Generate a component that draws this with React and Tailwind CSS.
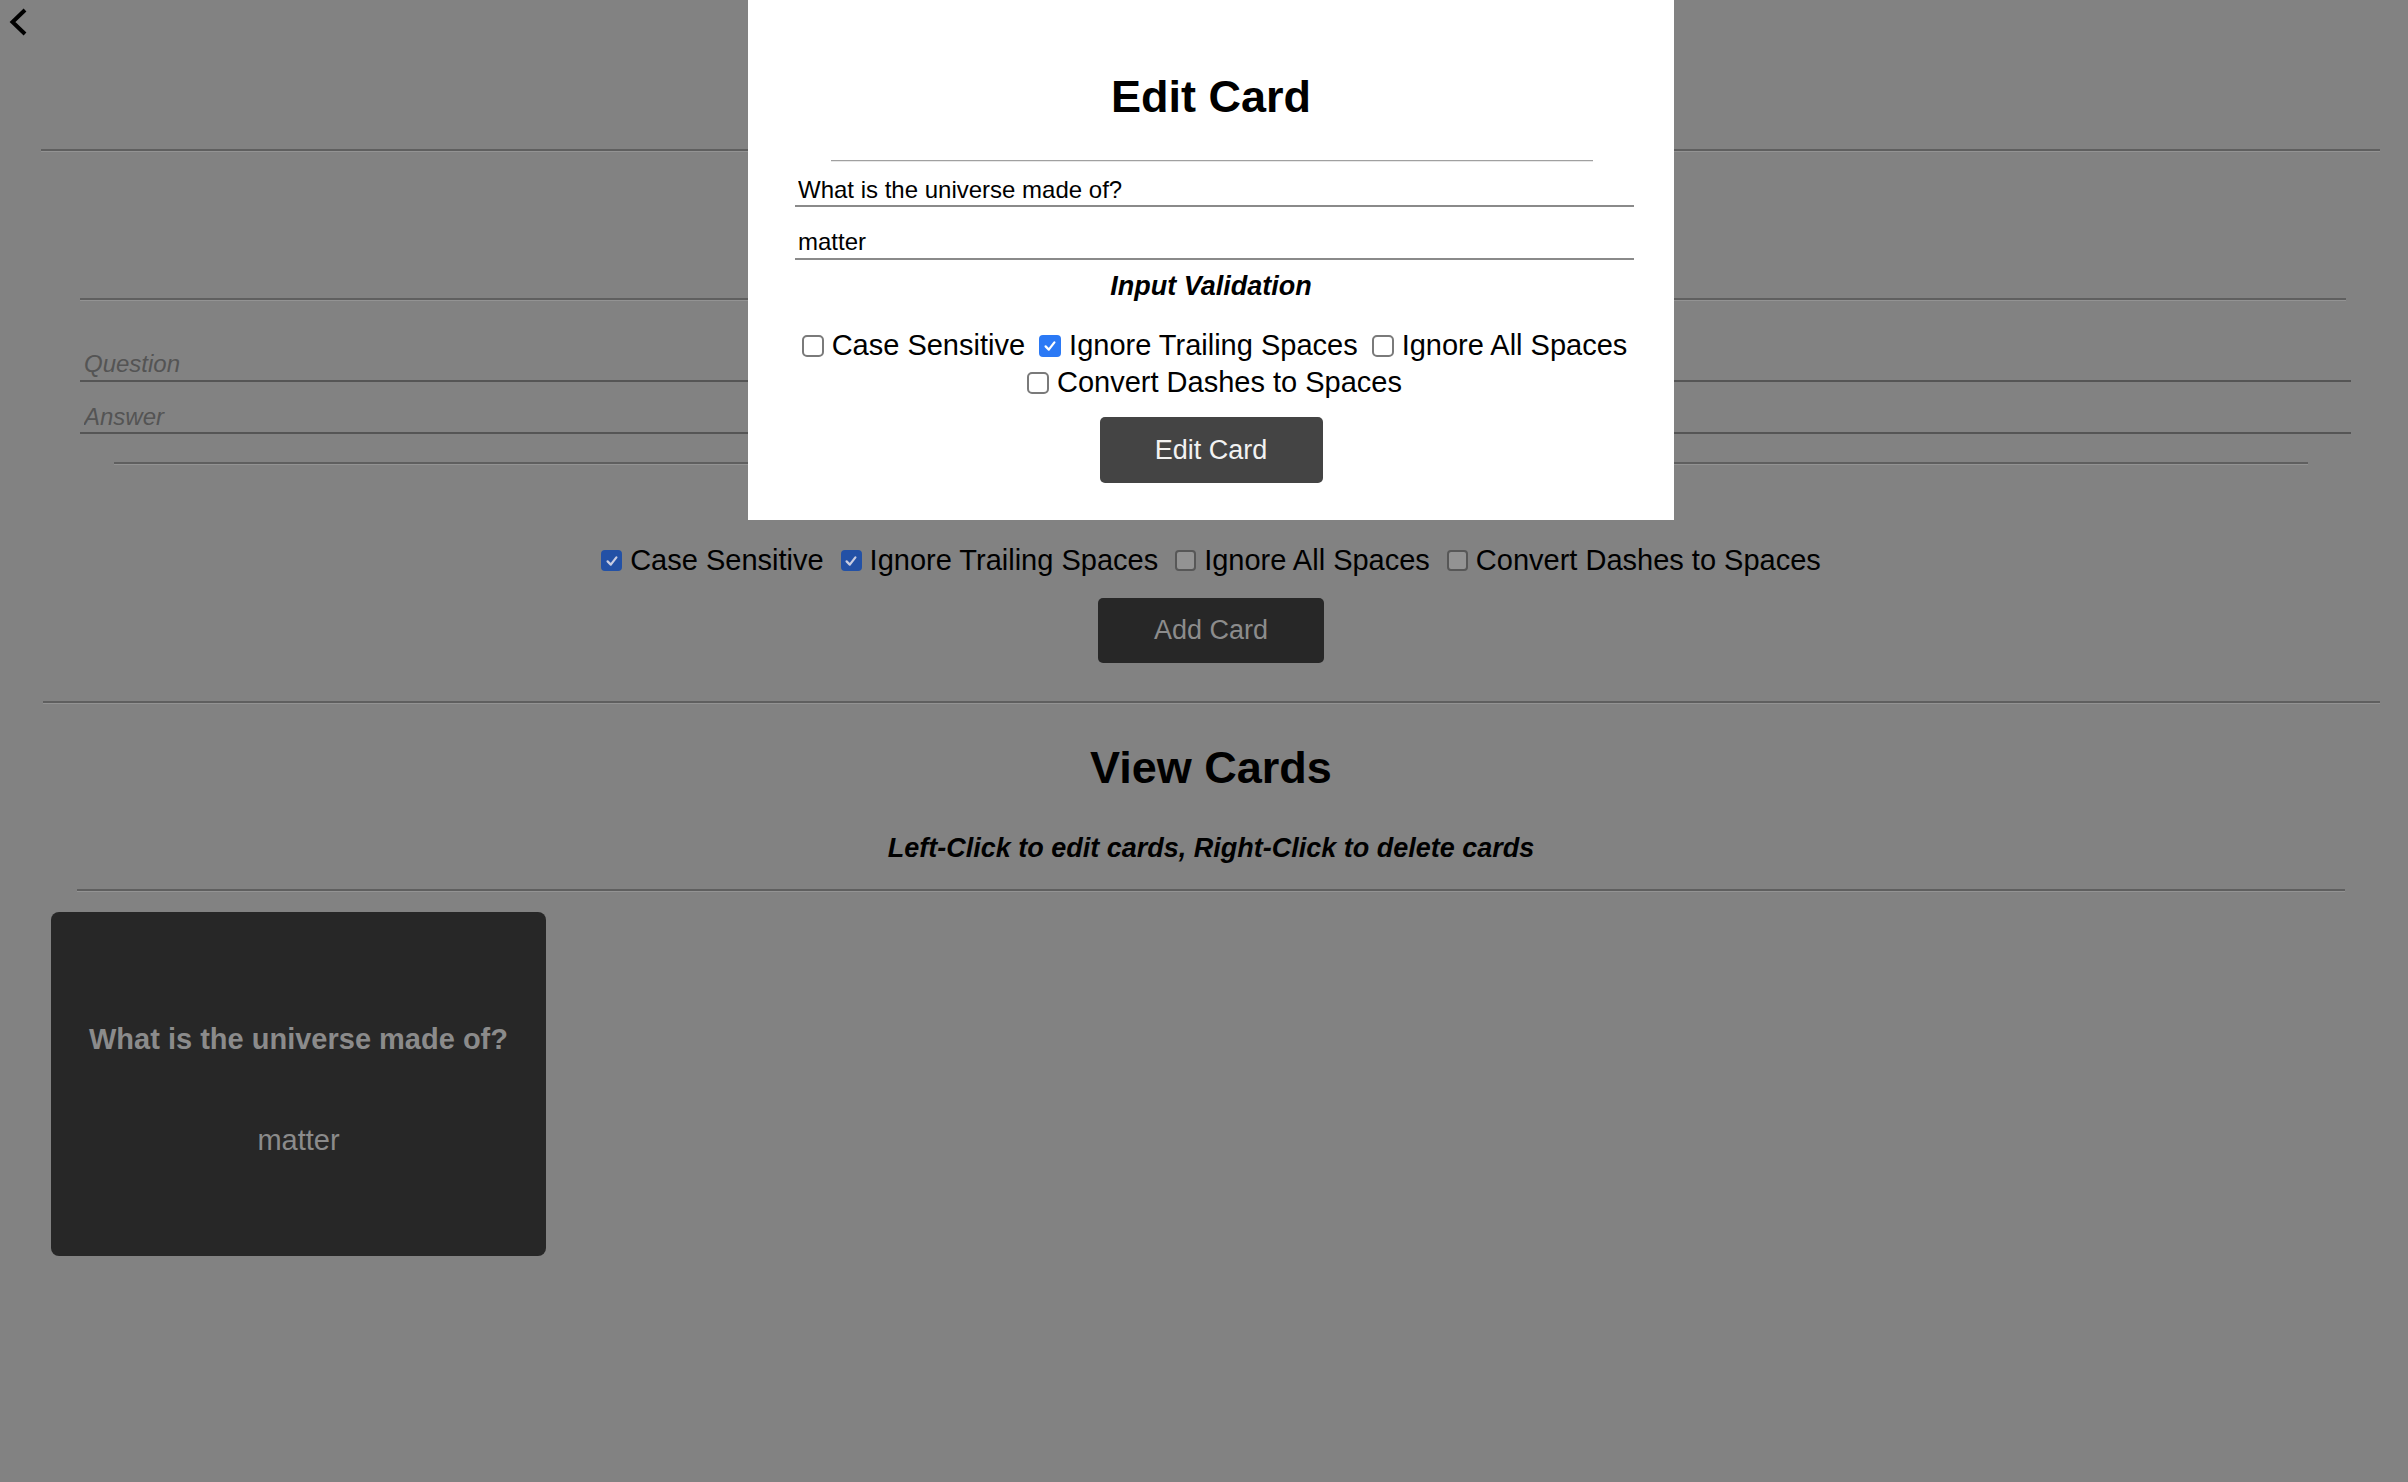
import React from "react";

const Hr = ({ className }) => (
  <div className={`border-t-2 border-t-[#5f5f5f] border-b border-b-[#939393] ${className}`} />
);

function Tick({ color }) {
  return (
    <svg width="16" height="16" viewBox="0 0 20 20">
      <path d="M4.5 10.5 L8.5 14.5 L15.5 5.5" fill="none" stroke={color} strokeWidth="2.8" strokeLinecap="round" strokeLinejoin="round" />
    </svg>
  );
}

function Box({ checked, dim }) {
  if (dim) {
    return checked ? (
      <span className="flex h-[21px] w-[21px] shrink-0 items-center justify-center rounded-[4px] bg-[#2351a6]">
        <Tick color="#c9cde2" />
      </span>
    ) : (
      <span className="h-[21px] w-[21px] shrink-0 rounded-[4px] border-2 border-[#575757] bg-[#939393]" />
    );
  }
  return checked ? (
    <span className="flex h-[22px] w-[22px] shrink-0 items-center justify-center rounded-[4px] bg-[#2b79f5]">
      <Tick color="#ffffff" />
    </span>
  ) : (
    <span className="h-[22px] w-[22px] shrink-0 rounded-[5px] border-2 border-[#7a7a7a] bg-white" />
  );
}

const options = ["Case Sensitive", "Ignore Trailing Spaces", "Ignore All Spaces", "Convert Dashes to Spaces"];

function Options({ values, dim, className }) {
  return (
    <div className={`flex flex-wrap justify-center text-[29px] leading-[37px] ${className}`}>
      {options.map((o, i) => (
        <label key={o} className="flex items-center gap-[8px]">
          <Box checked={values[i]} dim={dim} />
          <span>{o}</span>
        </label>
      ))}
    </div>
  );
}

export default function App() {
  return (
    <div className="relative min-h-screen bg-[#828282] font-['Liberation_Sans',Arial,sans-serif] text-black">
      <div className="h-[149px]">
        <svg width="32" height="42" viewBox="0 0 32 42">
          <path d="M25 10 L12.5 22 L25 34" fill="none" stroke="#000" strokeWidth="4" />
        </svg>
      </div>
      <div className="pl-[14px] pb-[120px]">
        <Hr className="ml-[27px] mr-[28px]" />
        <div className="h-[146px]" />
        <Hr className="ml-[66px] mr-[62px]" />
        <div className="ml-[66px] mr-[57px] mt-[29px]">
          <input
            placeholder="Question"
            className="block h-[52px] w-full border-b-2 border-[#555] bg-transparent px-[4px] pt-[19px] pb-[1px] text-[24px] outline-none placeholder:italic placeholder:text-[#545454]"
          />
          <input
            placeholder="Answer"
            className="block h-[52px] w-full border-b-2 border-[#555] bg-transparent px-[4px] pt-[20px] pb-0 text-[24px] outline-none placeholder:italic placeholder:text-[#545454]"
          />
        </div>
        <Hr className="mx-[100px] mt-[28px]" />
        <Options values={[true, true, false, false]} dim className="mt-[77px] gap-x-[17px]" />
        <div className="mt-[19px] flex justify-center">
          <button className="h-[65px] w-[226px] rounded-[5px] bg-[#272727] text-[27px] text-[#8c8c8c]">Add Card</button>
        </div>
        <Hr className="mt-[38px] ml-[29px] mr-[28px]" />
        <h2 className="mt-[38px] text-center text-[45px] font-bold leading-[52px]">View Cards</h2>
        <p className="mt-[38px] text-center text-[27px] font-bold italic leading-[32px]">
          Left-Click to edit cards, Right-Click to delete cards
        </p>
        <Hr className="mx-[63px] mt-[25px]" />
        <div className="ml-[37px] mt-[20px] flex h-[344px] w-[495px] flex-col items-center rounded-[8px] bg-[#272727] text-[#8b8b8b]">
          <div className="pt-[110px] text-[29px] font-bold leading-[34px]">What is the universe made of?</div>
          <div className="mt-[67px] text-[29px] leading-[34px]">matter</div>
        </div>
      </div>

      <div className="absolute left-[748px] top-0 h-[520px] w-[926px] bg-white">
        <h2 className="pt-[71px] text-center text-[45px] font-bold leading-[52px]">Edit Card</h2>
        <div className="pl-[47px] pr-[40px]">
          <div className="ml-[36px] mr-[41px] mt-[37px] border-t border-t-[#a0a0a0] border-b border-b-[#e8e8e8]" />
          <input
            defaultValue="What is the universe made of?"
            className="block h-[45px] w-full border-b-2 border-[#8a8a8a] bg-transparent px-[3px] pt-[14px] pb-[1px] text-[24px] leading-[28px] outline-none"
          />
          <input
            defaultValue="matter"
            className="block h-[53px] w-full border-b-2 border-[#8a8a8a] bg-transparent px-[3px] pt-[21px] pb-[2px] text-[24px] leading-[28px] outline-none"
          />
        </div>
        <p className="mt-[10px] text-center text-[27px] font-bold italic leading-[32px]">Input Validation</p>
        <div className="pl-[47px] pr-[40px]">
          <Options values={[false, true, false, false]} className="mt-[25px] gap-x-[14px]" />
        </div>
        <div className="mt-[16px] flex justify-center">
          <button className="h-[66px] w-[223px] rounded-[5px] bg-[#444444] text-[27px] text-[#f2f2f2]">Edit Card</button>
        </div>
      </div>
    </div>
  );
}
